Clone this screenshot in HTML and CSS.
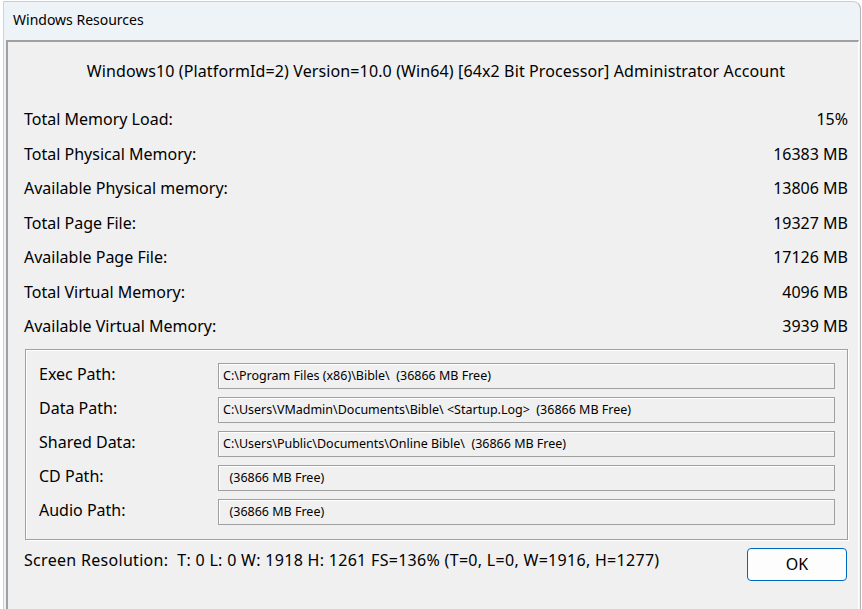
FILE: index.html
```html
<!DOCTYPE html>
<html>
<head>
<meta charset="utf-8">
<link rel="stylesheet" href="styles.css">
</head>
<body>
<div class="window">
  <div class="titlebar">Windows Resources</div>
  <div class="client">
    <div class="header">Windows10 (PlatformId=2) Version=10.0 (Win64) [64x2 Bit Processor] Administrator Account</div>
    <div class="stats">
      <div class="row"><span>Total Memory Load:</span><span>15%</span></div>
      <div class="row"><span>Total Physical Memory:</span><span>16383 MB</span></div>
      <div class="row"><span>Available Physical memory:</span><span>13806 MB</span></div>
      <div class="row"><span>Total Page File:</span><span>19327 MB</span></div>
      <div class="row"><span>Available Page File:</span><span>17126 MB</span></div>
      <div class="row"><span>Total Virtual Memory:</span><span>4096 MB</span></div>
      <div class="row"><span>Available Virtual Memory:</span><span>3939 MB</span></div>
    </div>
    <div class="group">
      <div class="prow"><span class="plabel">Exec Path:</span><span class="field">C:\Program Files (x86)\Bible\  (36866 MB Free)</span></div>
      <div class="prow"><span class="plabel">Data Path:</span><span class="field">C:\Users\VMadmin\Documents\Bible\ &lt;Startup.Log&gt;  (36866 MB Free)</span></div>
      <div class="prow"><span class="plabel">Shared Data:</span><span class="field">C:\Users\Public\Documents\Online Bible\  (36866 MB Free)</span></div>
      <div class="prow"><span class="plabel">CD Path:</span><span class="field">  (36866 MB Free)</span></div>
      <div class="prow"><span class="plabel">Audio Path:</span><span class="field">  (36866 MB Free)</span></div>
    </div>
    <div class="footer">
      <span class="res">Screen Resolution:  T: 0 L: 0 W: 1918 H: 1261 FS=136% (T=0, L=0, W=1916, H=1277)</span>
      <button class="ok">OK</button>
    </div>
  </div>
</div>
</body>
</html>
```
FILE: styles.css
```css
html, body {
  margin: 0;
  padding: 0;
  background: #ffffff;
  overflow: hidden;
}
body {
  font-family: "Noto Sans", "Open Sans", sans-serif;
  color: #000;
}
.window {
  margin: 1px 0 0 3px;
  width: 856px;
  height: 620px;
  border-left: 1px solid #cfd3d6;
  border-top: 1px solid #c9cfcc;
  border-right: 1px solid #b4b4b4;
  border-top-right-radius: 8px;
  background: #eef3f8;
  display: flex;
  flex-direction: column;
}
.titlebar {
  height: 38px;
  line-height: 35px;
  padding-left: 9px;
  font-size: 14px;
  flex: none;
}
.client {
  margin: 0 1px 0 2px;
  flex: 1;
  background: #f0f0f0;
  border-style: solid;
  border-width: 2px 1px 1px 2px;
  border-color: #a0a0a0 #ffffff #ffffff #a0a0a0;
  display: flex;
  flex-direction: column;
  padding: 0 10px 0 16px;
}
.header {
  margin-top: 17px;
  height: 24px;
  line-height: 24px;
  text-align: center;
  font-size: 16px;
  letter-spacing: 0.12px;
}
.stats {
  margin-top: 19px;
  display: flex;
  flex-direction: column;
}
.row {
  height: 34.5px;
  line-height: 34px;
  font-size: 16px;
  display: flex;
  justify-content: space-between;
}
.group {
  margin: 5px 0 0 1px;
  border: 1px solid #a0a0a0;
  box-shadow: inset 1px 1px 0 #ffffff, 1px 1px 0 #ffffff;
  padding: 13px 12px 14px 13px;
  display: flex;
  flex-direction: column;
  gap: 8px;
}
.prow {
  display: flex;
  height: 26px;
  align-items: center;
}
.plabel {
  width: 179px;
  flex: none;
  font-size: 16px;
  margin-top: -4px;
}
.field {
  flex: 1;
  height: 24px;
  line-height: 24px;
  border: 1px solid #a0a0a0;
  box-shadow: inset 1px 1px 0 #ffffff;
  font-size: 12.5px;
  padding-left: 4px;
  white-space: pre;
  overflow: hidden;
}
.footer {
  margin-top: 8px;
  display: flex;
  justify-content: space-between;
  align-items: flex-start;
  padding-right: 1px;
}
.res {
  font-size: 16px;
  white-space: pre;
  line-height: 22px;
  margin-top: 1px;
  letter-spacing: 0.3px;
}
.ok {
  width: 100px;
  height: 33px;
  background: #fdfdfd;
  border: 1px solid #0067c0;
  border-radius: 4px;
  font-family: "Noto Sans", "Open Sans", sans-serif;
  font-size: 16px;
  color: #000;
  padding: 0;
}
```
